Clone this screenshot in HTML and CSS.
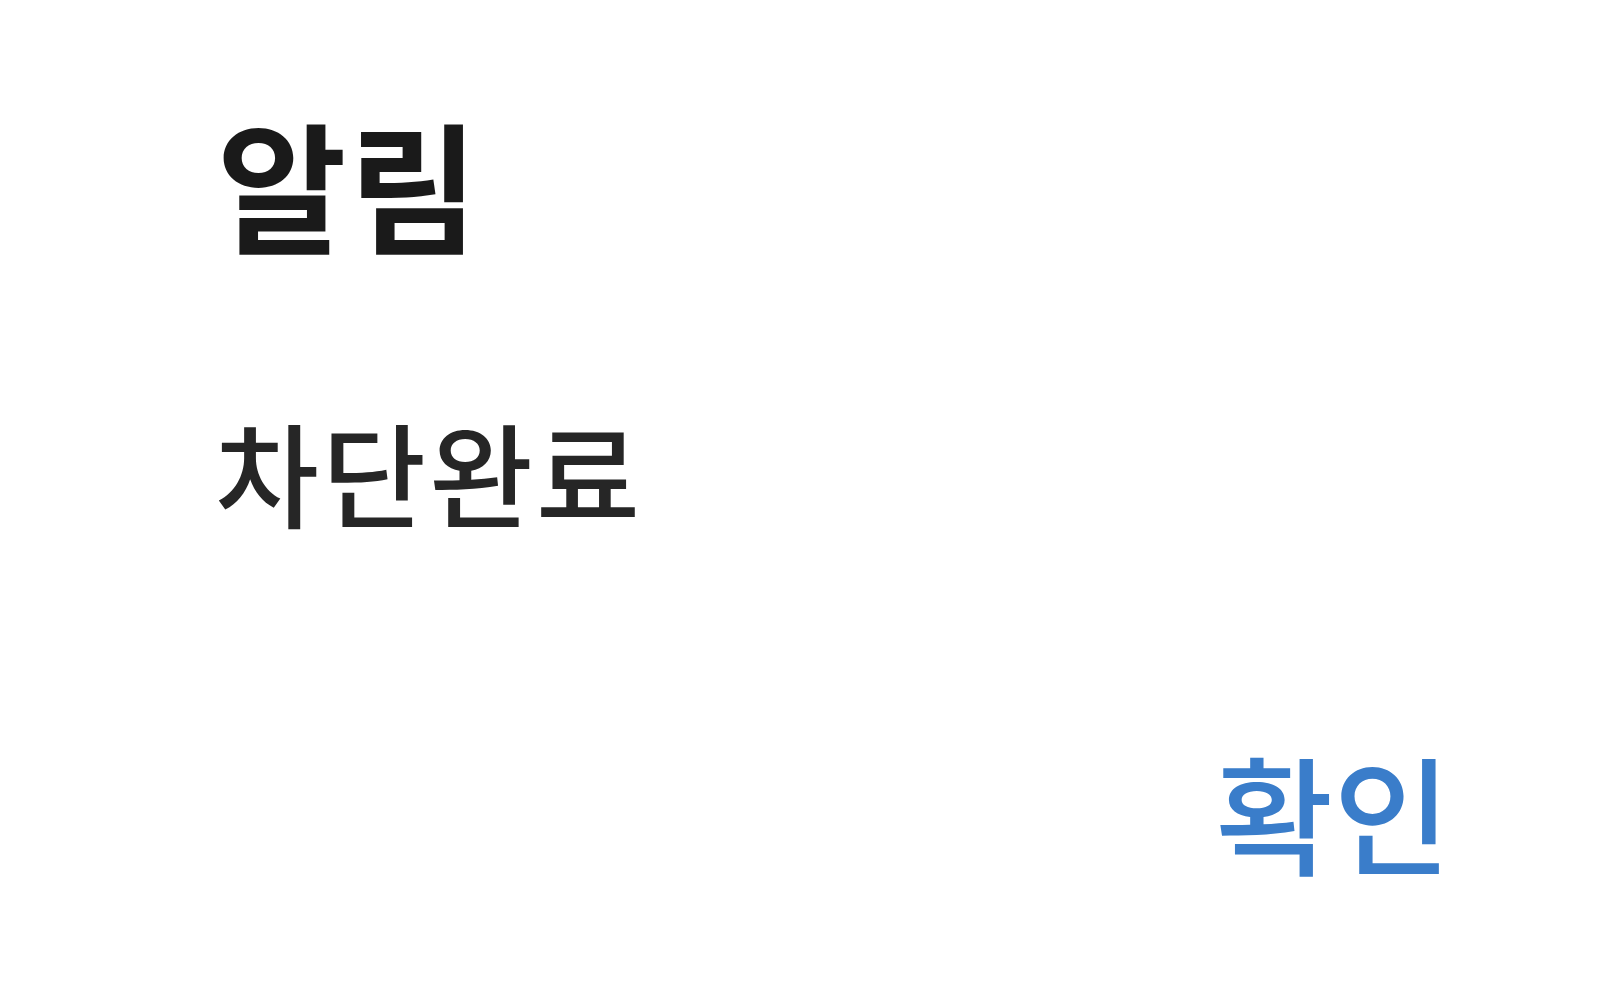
FILE: index.html
```html
<!DOCTYPE html>
<html lang="ko">
<head>
<meta charset="utf-8">
<link rel="stylesheet" href="styles.css">
</head>
<body>
<div class="dialog">
  <h1 class="title">알림</h1>
  <p class="message">차단완료</p>
  <div class="actions">
    <button class="ok">확인</button>
  </div>
</div>
</body>
</html>
```
FILE: styles.css
```css
html, body {
  margin: 0;
  padding: 0;
  background: #ffffff;
  width: 1600px;
  height: 1001px;
  overflow: hidden;
}
.dialog {
  font-family: "Noto Sans CJK KR", "Noto Sans", sans-serif;
  display: flex;
  flex-direction: column;
  padding: 111px 149px 0 217px;
}
.title {
  margin: 0;
  font-size: 141px;
  font-weight: 600;
  line-height: 1;
  letter-spacing: 2px;
  color: #1a1a1a;
}
.message {
  margin: 162px 0 0 -2px;
  font-size: 113px;
  font-weight: 500;
  line-height: 1;
  letter-spacing: 3px;
  color: #262626;
}
.actions {
  display: flex;
  justify-content: flex-end;
  margin-top: 220px;
}
.ok {
  border: none;
  background: none;
  padding: 0;
  font-family: inherit;
  font-size: 128px;
  font-weight: 500;
  line-height: 1;
  color: #3a7dca;
}
```
